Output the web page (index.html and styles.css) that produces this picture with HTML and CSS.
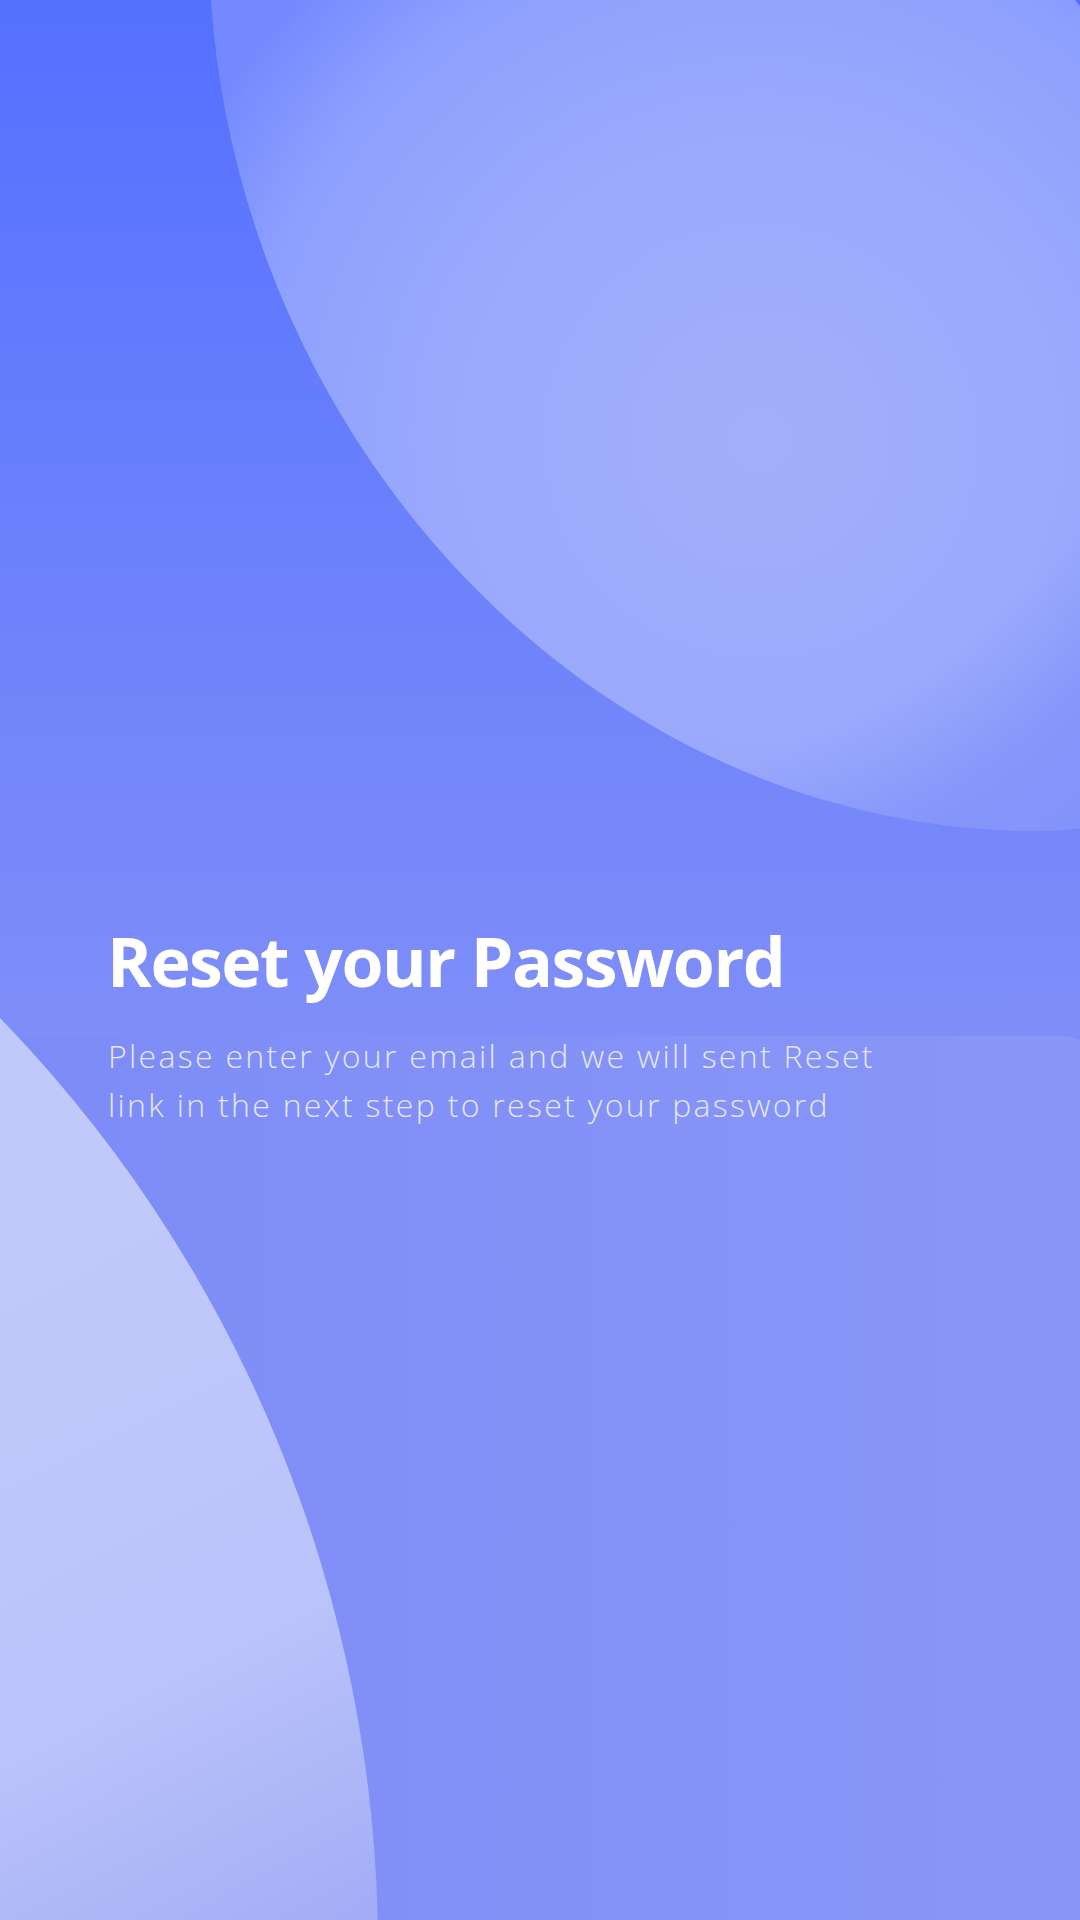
FILE: index.html
```html
<!DOCTYPE html>
<html lang="en">
<head>
<meta charset="utf-8">
<title>Reset your Password</title>
<link rel="stylesheet" href="styles.css">
</head>
<body>
<main class="screen">
  <svg class="backdrop" viewBox="0 0 1080 1920" width="1080" height="1920" aria-hidden="true">
    <defs>
      <linearGradient id="bgGrad" x1="0" y1="0" x2="0" y2="1040" gradientUnits="userSpaceOnUse">
        <stop offset="0" stop-color="#5470FF"/>
        <stop offset="0.5" stop-color="#6A80FC"/>
        <stop offset="1" stop-color="#7F8EF8"/>
      </linearGradient>
      <linearGradient id="panelGrad" x1="0" y1="0" x2="1080" y2="0" gradientUnits="userSpaceOnUse">
        <stop offset="0" stop-color="#7D8BF7"/>
        <stop offset="1" stop-color="#8A97F7"/>
      </linearGradient>
      <radialGradient id="blobA" cx="760" cy="440" r="640" gradientUnits="userSpaceOnUse">
        <stop offset="0" stop-color="#A2AFFB"/>
        <stop offset="0.5" stop-color="#9AA9FC"/>
        <stop offset="0.8" stop-color="#8EA0FE"/>
        <stop offset="1" stop-color="#7489FF"/>
      </radialGradient>
      <radialGradient id="blobAShade" cx="560" cy="150" r="760" gradientUnits="userSpaceOnUse">
        <stop offset="0.84" stop-color="#6E7DF5" stop-opacity="0"/>
        <stop offset="1" stop-color="#6E7DF5" stop-opacity="0.38"/>
      </radialGradient>
      <linearGradient id="blobB" x1="60" y1="1250" x2="420" y2="1950" gradientUnits="userSpaceOnUse">
        <stop offset="0" stop-color="#C1C9FB"/>
        <stop offset="0.55" stop-color="#BAC3FA"/>
        <stop offset="1" stop-color="#9EA9F5"/>
      </linearGradient>
    </defs>
    <rect x="0" y="0" width="1080" height="1920" fill="url(#bgGrad)"/>
    <path d="M211 0 C240 440 590 831 1040 831 C1055 831 1068 830 1080 828 L1080 6 L1075 0 Z" fill="url(#blobA)"/>
    <path d="M211 0 C240 440 590 831 1040 831 C1055 831 1068 830 1080 828 L1080 6 L1075 0 Z" fill="url(#blobAShade)"/>
    <path d="M0 1036 H1063 A36 36 0 0 1 1099 1072 V1920 H0 Z" fill="url(#panelGrad)"/>
    <circle cx="-960" cy="1950" r="1338" fill="url(#blobB)"/>
  </svg>

  <section class="intro">
    <h1 class="title">Reset your Password</h1>
    <p class="lead">Please enter your email and we will sent Reset link in the next step to reset your password</p>
  </section>
</main>
</body>
</html>
```

FILE: styles.css
```css
html, body {
  margin: 0;
  padding: 0;
}

body {
  width: 1080px;
  height: 1920px;
  overflow: hidden;
  background: #8794F7;
  font-family: "Open Sans", "Noto Sans", sans-serif;
}

.screen {
  position: relative;
  width: 1080px;
  height: 1920px;
  overflow: hidden;
}

.backdrop {
  position: absolute;
  left: 0;
  top: 0;
  display: block;
}

.intro {
  position: relative;
  display: flex;
  flex-direction: column;
  padding: 921px 0 0 107px;
}

.title {
  margin: 0;
  font-size: 68px;
  line-height: 80px;
  font-weight: 700;
  color: #FFFFFF;
  letter-spacing: -1.5px;
}

.lead {
  margin: 30px 0 0 1px;
  max-width: 800px;
  font-size: 32px;
  line-height: 49px;
  font-weight: 300;
  color: #E6E8F8;
  letter-spacing: 2.3px;
}
```
